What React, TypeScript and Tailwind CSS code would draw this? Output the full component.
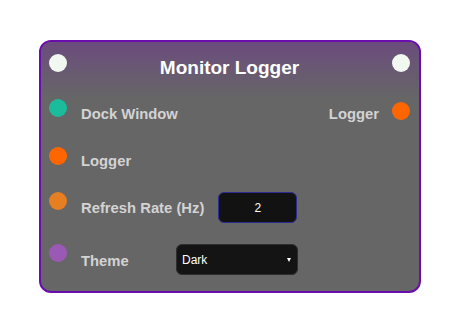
import React from "react";

const font = { fontFamily: '"Liberation Sans", Arial, sans-serif' };

function Dot({ color, className = "" }: { color: string; className?: string }) {
  return <div className={`w-[18px] h-[18px] rounded-full shrink-0 ${color} ${className}`} />;
}

export default function App() {
  return (
    <div className="min-h-screen bg-white pt-[40px] pl-[39px]" style={font}>
      <div className="w-[382px] h-[253px] rounded-[12px] border-2 border-[#6a0dad] bg-[#666666] overflow-hidden flex flex-col">
        {/* Header */}
        <div className="h-[57px] shrink-0 bg-gradient-to-b from-[#6b4b7d] to-[#666666] pt-[12px] pl-[8px] pr-[9px] flex items-start justify-between">
          <Dot color="bg-[#f0f8f0]" />
          <div className="mt-[3px] text-[19px] leading-[22px] font-bold text-white">Monitor Logger</div>
          <Dot color="bg-[#f0f8f0]" />
        </div>

        {/* Dock Window / Logger out */}
        <div className="flex items-start pl-[8px] pr-[9px]">
          <Dot color="bg-[#1abc9c]" />
          <div className="ml-[14px] h-[31px] flex items-center text-[14.8px] font-bold text-[#d3d3d3]">Dock Window</div>
          <div className="ml-auto flex items-start gap-[13px]">
            <div className="h-[31px] flex items-center text-[14.8px] font-bold text-[#d3d3d3]">Logger</div>
            <Dot color="bg-[#ff6600]" className="mt-[3px]" />
          </div>
        </div>

        {/* Logger in */}
        <div className="mt-[17px] flex items-start pl-[8px]">
          <Dot color="bg-[#ff6600]" />
          <div className="ml-[14px] h-[29px] flex items-center text-[14.8px] font-bold text-[#d3d3d3]">Logger</div>
        </div>

        {/* Refresh rate */}
        <div className="mt-[16px] flex items-start pl-[8px]">
          <Dot color="bg-[#e67e22]" />
          <div className="ml-[14px] h-[31px] flex items-center gap-[14px]">
            <div className="min-w-[81px] pt-[2px] text-[14.8px] font-bold text-[#d3d3d3]">Refresh Rate (Hz)</div>
            <input
              type="text"
              defaultValue="2"
              className="w-[79px] h-[31px] bg-[#121212] border border-[#2c2c90] rounded-[6px] text-center text-white text-[12px] outline-none"
            />
          </div>
        </div>

        {/* Theme */}
        <div className="mt-[21px] flex items-start pl-[8px]">
          <Dot color="bg-[#9b59b6]" />
          <div className="ml-[14px] h-[31px] flex items-center gap-[14px]">
            <div className="min-w-[81px] pt-[3px] text-[14.8px] font-bold text-[#d3d3d3]">Theme</div>
            <div className="w-[122px] h-[31px] bg-[#141414] border border-[#2e2e2e] rounded-[6px] flex items-center justify-between pl-[5px] pr-[6px] text-white text-[12px]">
              <span>Dark</span>
              <span className="w-0 h-0 border-l-[2.5px] border-r-[2.5px] border-t-[4px] border-l-transparent border-r-transparent border-t-white" />
            </div>
          </div>
        </div>
      </div>
    </div>
  );
}
